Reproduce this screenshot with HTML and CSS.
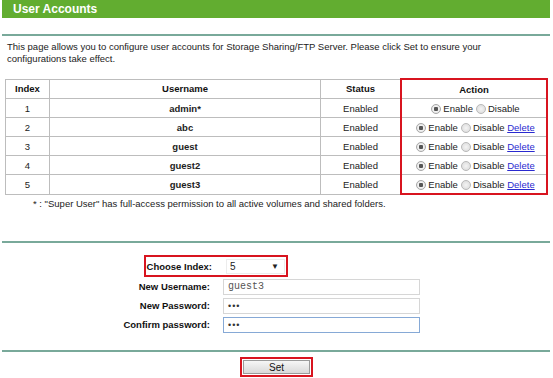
FILE: index.html
```html
<!DOCTYPE html>
<html lang="en">
<head>
    <meta charset="UTF-8">
    <title>User Accounts</title>
    <link rel="stylesheet" href="styles.css">
</head>
<body>
    <div class="title-bar">User Accounts</div>
    <div class="rule"></div>

    <p class="intro">This page allows you to configure user accounts for Storage Sharing/FTP Server. Please click Set to ensure your configurations take effect.</p>

    <table class="users">
        <tr>
            <th class="c-index">Index</th>
            <th class="c-name">Username</th>
            <th class="c-status">Status</th>
            <th class="c-action top">Action</th>
        </tr>
        <tr>
            <td>1</td><td class="bold">admin*</td><td>Enabled</td>
            <td class="c-action"><span class="radio on"></span>Enable<span class="radio"></span>Disable</td>
        </tr>
        <tr>
            <td>2</td><td class="bold">abc</td><td>Enabled</td>
            <td class="c-action"><span class="radio on"></span>Enable<span class="radio"></span>Disable <a href="#">Delete</a></td>
        </tr>
        <tr>
            <td>3</td><td class="bold">guest</td><td>Enabled</td>
            <td class="c-action"><span class="radio on"></span>Enable<span class="radio"></span>Disable <a href="#">Delete</a></td>
        </tr>
        <tr>
            <td>4</td><td class="bold">guest2</td><td>Enabled</td>
            <td class="c-action"><span class="radio on"></span>Enable<span class="radio"></span>Disable <a href="#">Delete</a></td>
        </tr>
        <tr>
            <td>5</td><td class="bold">guest3</td><td>Enabled</td>
            <td class="c-action bottom"><span class="radio on"></span>Enable<span class="radio"></span>Disable <a href="#">Delete</a></td>
        </tr>
    </table>

    <p class="note">* : "Super User" has full-access permission to all active volumes and shared folders.</p>

    <div class="rule second"></div>

    <div class="form">
        <div class="choose">
            <span class="choose-label">Choose Index:</span>
            <span class="select">5<span class="arrow">▼</span></span>
        </div>
        <div class="row">
            <label>New Username:</label>
            <span class="field mono">guest3</span>
        </div>
        <div class="row">
            <label>New Password:</label>
            <span class="field dots">•••</span>
        </div>
        <div class="row">
            <label>Confirm password:</label>
            <span class="field dots focus">•••</span>
        </div>
    </div>

    <div class="rule third"></div>

    <div class="actions">
        <div class="set-box"><button class="set">Set</button></div>
    </div>
</body>
</html>
```

FILE: styles.css
```css
body {
    margin: 0;
    background: #fff;
    font-family: "Liberation Sans", Arial, sans-serif;
    font-size: 9.5px;
    color: #222;
}

.title-bar {
    margin: 0 3px 0 2px;
    height: 18px;
    line-height: 18px;
    padding-left: 11px;
    background: #62ad30;
    color: #fff;
    font-size: 12px;
    font-weight: bold;
}

.rule {
    margin: 16px 3px 0 2px;
    height: 2px;
    background: #79a99a;
}

.rule.second {
    margin-top: 31px;
}

.rule.third {
    margin-top: 16px;
}

.intro {
    margin: 5px 0 0;
    padding: 0 60px 0 7px;
    line-height: 12px;
}

/* user table */
.users {
    margin: 13px 0 0 5px;
    width: 543px;
    border-collapse: collapse;
    table-layout: fixed;
}

.users th,
.users td {
    border: 1px solid #bdbdbd;
    height: 18px;
    padding: 0;
    text-align: center;
    white-space: nowrap;
}

.users th {
    font-weight: bold;
    color: #111;
}

.c-index { width: 43px; }
.c-name { width: 270px; }
.c-status { width: 79px; }

.users .c-action {
    border-left: 2px solid #d8141f;
    border-right: 2px solid #d8141f;
}

.users .c-action.top { border-top: 2px solid #d8141f; }
.users .c-action.bottom { border-bottom: 2px solid #d8141f; }

.bold { font-weight: bold; }

.radio {
    display: inline-block;
    width: 8px;
    height: 8px;
    border: 1px solid #b9b9b9;
    border-radius: 50%;
    background: radial-gradient(circle, #f4f4f4 0, #d8d8d8 100%);
    vertical-align: -2px;
    margin: 0 2px 0 3px;
}

.radio.on {
    background: radial-gradient(circle, #555 0, #555 2px, #f2f2f2 2.5px, #ddd 100%);
    border-color: #a8a8a8;
}

.users a {
    color: #2a2ad0;
    text-decoration: underline;
}

.note {
    margin: 3px 0 0;
    padding-left: 33px;
    line-height: 12px;
}

/* form */
.form {
    margin-top: 12px;
}

.choose {
    display: inline-flex;
    align-items: center;
    margin-left: 144px;
    height: 16px;
    padding: 1px 1px 1px 0;
    border: 2px solid #d8141f;
}

.choose-label {
    width: 66px;
    text-align: right;
    white-space: nowrap;
    font-weight: bold;
    color: #111;
}

.select {
    display: inline-flex;
    justify-content: space-between;
    align-items: center;
    margin-left: 14px;
    width: 59px;
    height: 15px;
    padding: 0 5px 0 3px;
    box-sizing: border-box;
    border: 1px solid #ececec;
    font-size: 10px;
}

.arrow {
    font-size: 8px;
}

.row {
    display: flex;
    align-items: center;
    height: 19px;
}

.row label {
    width: 210px;
    text-align: right;
    white-space: nowrap;
    font-weight: bold;
    color: #111;
}

.field {
    margin-left: 13px;
    width: 197px;
    height: 16px;
    line-height: 14px;
    box-sizing: border-box;
    padding-left: 4px;
    border: 1px solid #d6d6d6;
}

.field.mono {
    font-family: "Liberation Mono", "Courier New", monospace;
    font-size: 10px;
    color: #555;
}

.field.dots {
    font-size: 9px;
    letter-spacing: 1px;
    color: #333;
}

.field.focus {
    border-color: #86a9d6;
}

/* submit */
.actions {
    display: flex;
    margin-top: 5px;
    padding-left: 240px;
}

.set-box {
    border: 2px solid #d8141f;
    padding: 1px;
}

.set {
    display: block;
    width: 67px;
    height: 14px;
    padding: 0;
    border: 1px solid #9a9a9a;
    background: linear-gradient(#f6f6f6, #d9d9d9);
    font-family: "Liberation Sans", Arial, sans-serif;
    font-size: 10px;
    color: #111;
}
```
